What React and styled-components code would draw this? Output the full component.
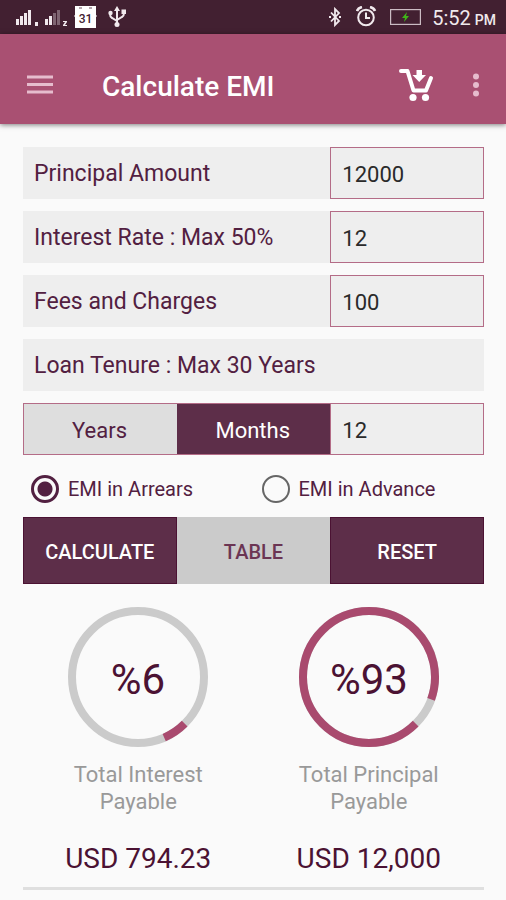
import React, {useState} from 'react';
import styled, {createGlobalStyle} from 'styled-components';

const GlobalStyle = createGlobalStyle`
  * {
    box-sizing: border-box;
  }

  body {
    margin: 0;
    background: #fafafa;
    color: #522041;
    font-family: Roboto, sans-serif;
  }

  button, input {
    margin: 0;
    border-radius: 0;
    font-family: inherit;
  }
`

const StatusBar = styled.div`
  display: flex;
  align-items: center;
  justify-content: space-between;
  height: 34px;
  padding: 0 10px 0 16px;
  background: #422031;
  color: #f1e9ed;
`

const StatusGroup = styled.div`
  display: flex;
  align-items: center;
  gap: ${props => props.$gap}px;

  svg {
    display: block;
  }
`

const Clock = styled.div`
  padding-top: 4px;
  font-size: 20px;
  line-height: 24px;
  white-space: nowrap;

  small {
    margin-left: 4px;
    font-size: 14px;
    font-weight: 500;
  }
`

const AppBar = styled.header`
  display: flex;
  align-items: center;
  height: 90px;
  padding: 12px 18px 0 26px;
  background: #a95072;
  box-shadow: 0 1px 5px rgba(0, 0, 0, 0.5);
`

const IconButton = styled.button`
  display: flex;
  padding: 0;
  border: 0;
  background: none;
  color: ${props => props.$soft ? '#e6bccd' : '#fff'};
  cursor: pointer;
`

const Title = styled.h1`
  flex: 1;
  margin: 0 0 0 48px;
  padding-top: 4px;
  color: #fff;
  font-size: 28px;
  font-weight: 500;
  line-height: 32px;
`

const Actions = styled.div`
  display: flex;
  align-items: center;
  gap: 30px;
`

const Form = styled.form`
  display: flex;
  flex-direction: column;
  gap: 12px;
  padding: 23px 22px 0 23px;
`

const Row = styled.div`
  display: grid;
  grid-template-columns: 2fr 1fr;
  min-height: 52px;
`

const FieldLabel = styled.label`
  display: flex;
  align-items: center;
  min-height: 52px;
  padding: 2px 11px 0;
  background: #eee;
  font-size: 23px;
  line-height: 26px;
`

const TextInput = styled.input`
  width: 100%;
  min-width: 0;
  padding: 2px 11px 0;
  border: 1px solid #b46c87;
  outline: 0;
  background: #eee;
  color: #2a2a2a;
  font-size: 22px;
`

const Segments = styled.div`
  display: grid;
  grid-template-columns: 1fr 1fr;
  border: 1px solid #b46c87;
  border-right: 0;
`

const Segment = styled.button`
  padding: 2px 2px 0 0;
  border: 0;
  background: ${props => props.$active ? '#5d2e49' : '#dedede'};
  color: ${props => props.$active ? '#fff' : '#522041'};
  font-size: 22px;
  cursor: pointer;
`

const Radios = styled.div`
  display: grid;
  grid-template-columns: 1fr 1fr;
  height: 44px;
`

const RadioLabel = styled.label`
  display: flex;
  align-items: center;
  gap: 9px;
  padding-left: 8px;
  font-size: 20px;
  line-height: 24px;
`

const Radio = styled.input`
  appearance: none;
  width: 28px;
  height: 28px;
  border: 2px solid #666;
  border-radius: 50%;

  &:checked {
    border-width: 3px;
    border-color: #522041;
    background: radial-gradient(circle, #522041 7px, transparent 8px);
  }
`

const Buttons = styled.div`
  display: grid;
  grid-template-columns: repeat(3, 1fr);
  margin-top: -6px;
`

const Button = styled.button`
  height: 67px;
  padding: 2px 0 0;
  border: ${props => props.$light ? '0' : '1px solid #4b1233'};
  background: ${props => props.$light ? '#cbcbcb' : '#5d2e49'};
  color: ${props => props.$light ? '#6b3553' : '#fff'};
  font-size: 20px;
  font-weight: 500;
  cursor: pointer;
`

const Results = styled.section`
  display: grid;
  grid-template-columns: 1fr 1fr;
  margin: 0 22px 0 23px;
  padding: 22px 0 12px;
  border-bottom: 3px solid #dfdfdf;
`

const Result = styled.div`
  display: flex;
  flex-direction: column;
  align-items: center;
  text-align: center;
`

const Ring = styled.svg`
  display: block;
  width: 142px;
  height: 142px;

  text {
    fill: #4b1233;
    font-size: 42px;
    text-anchor: middle;
  }
`

const Caption = styled.div`
  width: 150px;
  margin-top: 13px;
  color: #999;
  font-size: 22px;
  line-height: 27px;
`

const Amount = styled.div`
  margin-top: 28px;
  color: #4b1233;
  font-size: 28px;
  line-height: 32px;
`

const Signal = ({bars, dot}) => (
  <svg width='23' height='20' viewBox='0 0 23 20' fill='currentColor'>
    {[0, 1, 2, 3].map(i => (
      <rect key={i} x={i * 4} y={12 - i * 3} width='3' height={6 + i * 3} opacity={i < bars ? 1 : 0.35} />
    ))}
    {dot
      ? <rect x='19' y='15' width='3' height='4' />
      : <path d='M18 14h4v1l-2 3h2v1h-4v-1l2-3h-2z' />}
  </svg>
)

const CalendarIcon = () => (
  <svg width='23' height='24' viewBox='0 0 23 24'>
    <path d='M1 1h21v9l1 1-1 1v11H1V12l-1-1 1-1z' fill='#fff' />
    <path d='M5 3h3M15 3h3' stroke='#b5a6ae' strokeWidth='2' />
    <text x='11.5' y='18' fontSize='12' fontWeight='500' textAnchor='middle' fill='#422031'>31</text>
  </svg>
)

const UsbIcon = () => (
  <svg width='23' height='22' viewBox='-5 0 23 22' fill='none' stroke='currentColor' strokeWidth='2'>
    <path d='M9 4v14M9 15l-5-3q-2-1-2-4M9 14l5-3q2-1 2-4' />
    <path d='M9 0l3 5H6z' fill='currentColor' stroke='none' />
    <circle cx='9' cy='18.5' r='2.5' fill='currentColor' stroke='none' />
    <circle cx='2.5' cy='7' r='2.2' fill='currentColor' stroke='none' />
    <rect x='13.5' y='3.5' width='4.5' height='4.5' fill='currentColor' stroke='none' />
  </svg>
)

const BluetoothIcon = () => (
  <svg width='17' height='20' viewBox='0 0 17 20' fill='none' stroke='currentColor' strokeWidth='1.8'>
    <path d='M3 5.5l8 8.5-4 4V2l4 4-8 8.5' />
    <path d='M1 10h2M11 10h2' strokeWidth='2' />
  </svg>
)

const AlarmIcon = () => (
  <svg width='23' height='22' viewBox='0 0 23 22' fill='none' stroke='currentColor' strokeWidth='2'>
    <circle cx='10' cy='11.5' r='7.8' />
    <path d='M10 6.5V12h4' />
    <path d='M1 5q1-3 5-4M19 5q-1-3-5-4' strokeWidth='2.6' />
  </svg>
)

const BatteryIcon = () => (
  <svg width='31' height='16' viewBox='0 0 31 16'>
    <rect x='0.6' y='0.6' width='29.8' height='14.8' fill='none' stroke='#cbbcc4' strokeWidth='1.2' />
    <path d='M17 3l-5 6h3l-1 4 5-6h-3z' fill='#3fb618' />
  </svg>
)

const MenuIcon = () => (
  <svg width='28' height='22' viewBox='0 0 28 22'>
    <path d='M1 3h26M1 10.5h26M1 18h26' stroke='currentColor' strokeWidth='3' />
  </svg>
)

const CartIcon = () => (
  <svg width='36' height='34' viewBox='0 0 36 34' fill='none' stroke='currentColor' strokeWidth='4' strokeLinecap='round' strokeLinejoin='round'>
    <path d='M3 3h6.5l6 19.5H28L33 10' />
    <path d='M18.5 2h5.5v5h4l-6.8 7-6.7-7h4z' fill='currentColor' stroke='none' />
    <circle cx='15' cy='29.5' r='3.6' fill='currentColor' stroke='none' />
    <circle cx='27.5' cy='29.5' r='3.6' fill='currentColor' stroke='none' />
  </svg>
)

const MoreIcon = () => (
  <svg width='24' height='26' viewBox='0 0 24 26' fill='currentColor'>
    <circle cx='12' cy='4.5' r='3' />
    <circle cx='12' cy='13' r='3' />
    <circle cx='12' cy='21.5' r='3' />
  </svg>
)

const Gauge = ({percent}) => (
  <Ring viewBox='0 0 142 142'>
    <circle cx='71' cy='71' r='66' fill='none' stroke='#cbcbcb' strokeWidth='8' />
    <circle
      cx='71'
      cy='71'
      r='66'
      fill='none'
      stroke='#a94a6e'
      strokeWidth='8'
      pathLength='100'
      strokeDasharray={`${percent} 100`}
      transform='rotate(45 71 71)'
    />
    <text x='71' y='88'>%{percent}</text>
  </Ring>
)

const fields = [
  {id: 'principal', label: 'Principal Amount', value: '12000'},
  {id: 'rate', label: 'Interest Rate : Max 50%', value: '12'},
  {id: 'fees', label: 'Fees and Charges', value: '100'},
]

const results = [
  {percent: 6, caption: 'Total Interest Payable', amount: 'USD 794.23'},
  {percent: 93, caption: 'Total Principal Payable', amount: 'USD 12,000'},
]

const App = () => {
  const [unit, setUnit] = useState('Months');

  return (
    <>
      <GlobalStyle />
      <StatusBar>
        <StatusGroup $gap={6}>
          <Signal bars={4} dot />
          <Signal bars={2} />
          <CalendarIcon />
          <UsbIcon />
        </StatusGroup>
        <StatusGroup $gap={11}>
          <BluetoothIcon />
          <AlarmIcon />
          <BatteryIcon />
          <Clock>5:52<small>PM</small></Clock>
        </StatusGroup>
      </StatusBar>
      <AppBar>
        <IconButton type='button' aria-label='Menu' $soft><MenuIcon /></IconButton>
        <Title>Calculate EMI</Title>
        <Actions>
          <IconButton type='button' aria-label='Cart'><CartIcon /></IconButton>
          <IconButton type='button' aria-label='More' $soft><MoreIcon /></IconButton>
        </Actions>
      </AppBar>
      <Form onSubmit={e => e.preventDefault()}>
        {fields.map(field => (
          <Row key={field.id}>
            <FieldLabel htmlFor={field.id}>{field.label}</FieldLabel>
            <TextInput id={field.id} defaultValue={field.value} />
          </Row>
        ))}
        <FieldLabel htmlFor='tenure'>Loan Tenure : Max 30 Years</FieldLabel>
        <Row>
          <Segments>
            {['Years', 'Months'].map(name => (
              <Segment key={name} type='button' $active={unit === name} onClick={() => setUnit(name)}>
                {name}
              </Segment>
            ))}
          </Segments>
          <TextInput id='tenure' defaultValue='12' />
        </Row>
        <Radios>
          <RadioLabel><Radio type='radio' name='mode' defaultChecked />EMI in Arrears</RadioLabel>
          <RadioLabel><Radio type='radio' name='mode' />EMI in Advance</RadioLabel>
        </Radios>
        <Buttons>
          <Button type='submit'>CALCULATE</Button>
          <Button type='button' $light>TABLE</Button>
          <Button type='reset'>RESET</Button>
        </Buttons>
      </Form>
      <Results>
        {results.map(result => (
          <Result key={result.caption}>
            <Gauge percent={result.percent} />
            <Caption>{result.caption}</Caption>
            <Amount>{result.amount}</Amount>
          </Result>
        ))}
      </Results>
    </>
  )
}

export default App;
